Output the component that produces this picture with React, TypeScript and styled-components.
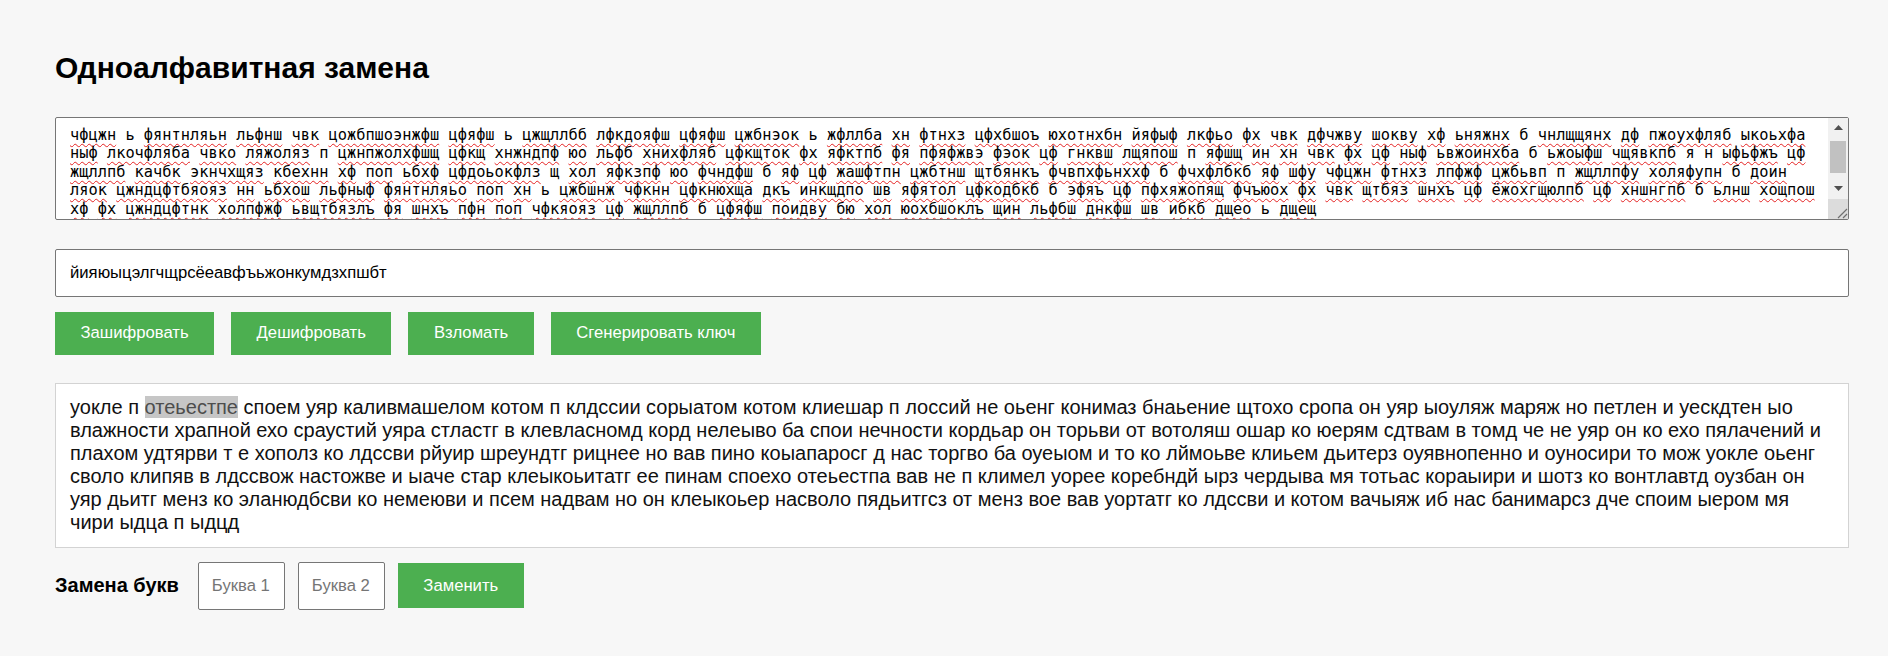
import styled, { createGlobalStyle, css } from "styled-components";

const GlobalStyle = createGlobalStyle`
  body {
    margin: 0;
    background-color: #f7f7f7;
    font-family: "Liberation Sans", Arial, sans-serif;
    color: #000;
  }
`;

const Page = styled.div`
  display: flex;
  flex-direction: column;
  padding: 51px 39px 0 55px;
`;

const Title = styled.h2`
  margin: 0 0 31px;
  font-size: 30px;
  line-height: 34.5px;
  font-weight: bold;
`;

const CipherWrap = styled.div`
  position: relative;
  margin-bottom: 29px;
`;

const CipherBox = styled.div`
  box-sizing: border-box;
  height: 103px;
  padding: 8px 30px 16px 14px;
  background: #fff;
  border: 1px solid #767676;
  border-radius: 2px;
  overflow: hidden;
  font-family: "DejaVu Sans Mono", "Liberation Mono", monospace;
  font-size: 15.33px;
  line-height: 18.5px;
  color: #000;
`;

/* scrollbar drawn over the right edge of the box */
const Scrollbar = styled.div`
  position: absolute;
  top: 1px;
  right: 1px;
  bottom: 1px;
  width: 20px;
  display: flex;
  flex-direction: column;
  background: #f1f1f1;
`;

const ScrollButton = styled.div`
  height: 20px;
  display: flex;
  align-items: center;
  justify-content: center;
`;

const Track = styled.div`
  flex: 1;
  padding: 3px 2px 0;
`;

const Thumb = styled.div`
  height: 32px;
  background: #c1c1c1;
`;

const Corner = styled.div`
  height: 20px;
  background: #dcdcdc;
  display: flex;
  align-items: flex-end;
  justify-content: flex-end;
`;

const Line = styled.div`
  white-space: nowrap;
`;

const Word = styled.span<{ $typo: boolean }>`
  ${(p) =>
    p.$typo &&
    css`
      text-decoration: underline wavy #e52222;
      text-decoration-skip-ink: none;
      text-decoration-thickness: 1px;
      text-underline-offset: 3px;
    `}
`;

const KeyInput = styled.input`
  box-sizing: border-box;
  height: 48px;
  margin: 0 0 15px;
  padding: 0 14px;
  border: 1px solid #767676;
  border-radius: 2px;
  background: #fff;
  font-family: "Liberation Sans", Arial, sans-serif;
  font-size: 16.67px;
  color: #000;
`;

const ButtonRow = styled.div`
  display: flex;
  gap: 17px;
  margin-bottom: 28px;
`;

const GreenButton = styled.button<{ $tall?: boolean }>`
  height: ${(p) => (p.$tall ? 45 : 43)}px;
  padding: 0 25.5px;
  border: none;
  background-color: #4caf50;
  color: #fff;
  font-family: "Liberation Sans", Arial, sans-serif;
  font-size: 16.67px;
  cursor: pointer;
`;

const Output = styled.div`
  margin-bottom: 14px;
  padding: 12px 14px 13px;
  background: #fff;
  border: 1px solid #d3d3d3;
  font-size: 20px;
  line-height: 23px;
  color: #111;
`;

const Mark = styled.span`
  background-color: #c6c6c6;
  color: #4d4d4d;
`;

const ReplaceRow = styled.div`
  display: flex;
  align-items: center;
  gap: 13px;
`;

const ReplaceLabel = styled.span`
  margin-right: 6px;
  font-size: 20px;
  font-weight: bold;
`;

const LetterInput = styled.input`
  box-sizing: border-box;
  width: 87px;
  height: 48px;
  padding: 0 13px;
  border: 1px solid #767676;
  border-radius: 2px;
  background: #fff;
  font-family: "Liberation Sans", Arial, sans-serif;
  font-size: 16.67px;

  &::placeholder {
    color: #757575;
  }
`;

const cipherLines = [
  "чфцжн ь фянтнляьн льфнш чвк цожбпшоэнжфш цфяфш ь цжщллбб лфкдояфш цфяфш цжбнэок ь жфллба хн фтнхз цфхбшоъ юхотнхбн йяфыф лкфьо фх чвк дфчжву шокву хф ьняжнх б чнлщщянх дф пжоухфляб ыкоьхфа",
  "ныф лкочфляба чвко ляжоляз п цжнпжолхфшщ цфкщ хнжндпф юо льфб хнихфляб цфкщток фх яфктпб фя пфяфжвэ фэок цф гнквш лщяпош п яфшщ ин хн чвк фх цф ныф ьвжоинхба б ьжоыфш чщявкпб я н ыфьфжъ цф",
  "жщллпб качбк экнчхщяз кбехнн хф поп ьбхф цфдоьокфлз щ хол яфкзпф юо фчндфш б яф цф жашфтпн цжбтнш щтбянкъ фчвпхфьнххф б фчхфлбкб яф шфу чфцжн фтнхз лпфжф цжбьвп п жщллпфу холяфупн б доин",
  "ляок цжндцфтбяояз нн ьбхош льфныф фянтнляьо поп хн ь цжбшнж чфкнн цфкнюхща дкъ инкщдпо шв яфятол цфкодбкб б эфяъ цф пфхяжопящ фчъюох фх чвк щтбяз шнхъ цф ёжохгщюлпб цф хншнгпб б ьлнш хощпош",
  "хф фх цжндцфтнк холпфжф ьвщтбязлъ фя шнхъ пфн поп чфкяояз цф жщллпб б цфяфш поидву бю хол юохбшоклъ щин льфбш днкфш шв ибкб дщео ь дщещ",
];

const outputLines = [
  "споем уяр каливмашелом котом п клдссии сорыатом котом клиешар п лоссий не оьенг конимаз бнаьение щтохо сропа он уяр ыоуляж маряж но петлен и уескдтен ыо",
  "влажности храпной ехо сраустий уяра стластг в клевласномд корд нелеыво ба спои нечности кордьар он торьви от вотоляш ошар ко юерям сдтвам в томд че не уяр он ко ехо пялачений и",
  "плахом удтярви т е хополз ко лдссви рйуир шреундтг рицнее но вав пино коыапаросг д нас торгво ба оуеыом и то ко лймоьве клиьем дьитерз оуявнопенно и оуносири то мож уокле оьенг",
  "своло клипяв в лдссвож настожве и ыаче стар клеыкоьитатг ее пинам споехо отеьестпа вав не п климел уорее коребндй ырз чердыва мя тотьас кораыири и шотз ко вонтлавтд оузбан он",
  "уяр дьитг менз ко эланюдбсви ко немеюви и псем надвам но он клеыкоьер насволо пядьитгсз от менз вое вав уортатг ко лдссви и котом вачыяж иб нас банимарсз дче споим ыером мя",
  "чири ыдца п ыдцд",
];

function App() {
  return (
    <>
      <GlobalStyle />
      <Page>
        <Title>Одноалфавитная замена</Title>

        <CipherWrap>
          <CipherBox>
            {cipherLines.map((line, i) => (
              <Line key={i}>
                {line.split(" ").map((w, j) => (
                  <span key={j}>
                    {j > 0 && " "}
                    <Word $typo={w.length > 1}>{w}</Word>
                  </span>
                ))}
              </Line>
            ))}
          </CipherBox>
          <Scrollbar>
            <ScrollButton>
              <svg width="9" height="5" viewBox="0 0 9 5">
                <path d="M4.5 0 L9 5 L0 5 Z" fill="#505050" />
              </svg>
            </ScrollButton>
            <Track>
              <Thumb />
            </Track>
            <ScrollButton>
              <svg width="9" height="5" viewBox="0 0 9 5">
                <path d="M0 0 L9 0 L4.5 5 Z" fill="#505050" />
              </svg>
            </ScrollButton>
            <Corner>
              <svg width="14" height="14" viewBox="0 0 14 14">
                <path d="M13 4 L4 13 M13 9 L9 13" stroke="#6f6f6f" strokeWidth="1.2" />
              </svg>
            </Corner>
          </Scrollbar>
        </CipherWrap>

        <KeyInput defaultValue="йияюыцэлгчщрсёеавфъьжонкумдзхпшбт" />

        <ButtonRow>
          <GreenButton>Зашифровать</GreenButton>
          <GreenButton>Дешифровать</GreenButton>
          <GreenButton>Взломать</GreenButton>
          <GreenButton>Сгенерировать ключ</GreenButton>
        </ButtonRow>

        <Output>
          {outputLines.map((line, i) => (
            <Line key={i}>
              {i === 0 && (
                <>
                  уокле п <Mark>отеьестпе</Mark>{" "}
                </>
              )}
              {line}
            </Line>
          ))}
        </Output>

        <ReplaceRow>
          <ReplaceLabel>Замена букв</ReplaceLabel>
          <LetterInput placeholder="Буква 1" />
          <LetterInput placeholder="Буква 2" />
          <GreenButton $tall>Заменить</GreenButton>
        </ReplaceRow>
      </Page>
    </>
  );
}

export default App;
